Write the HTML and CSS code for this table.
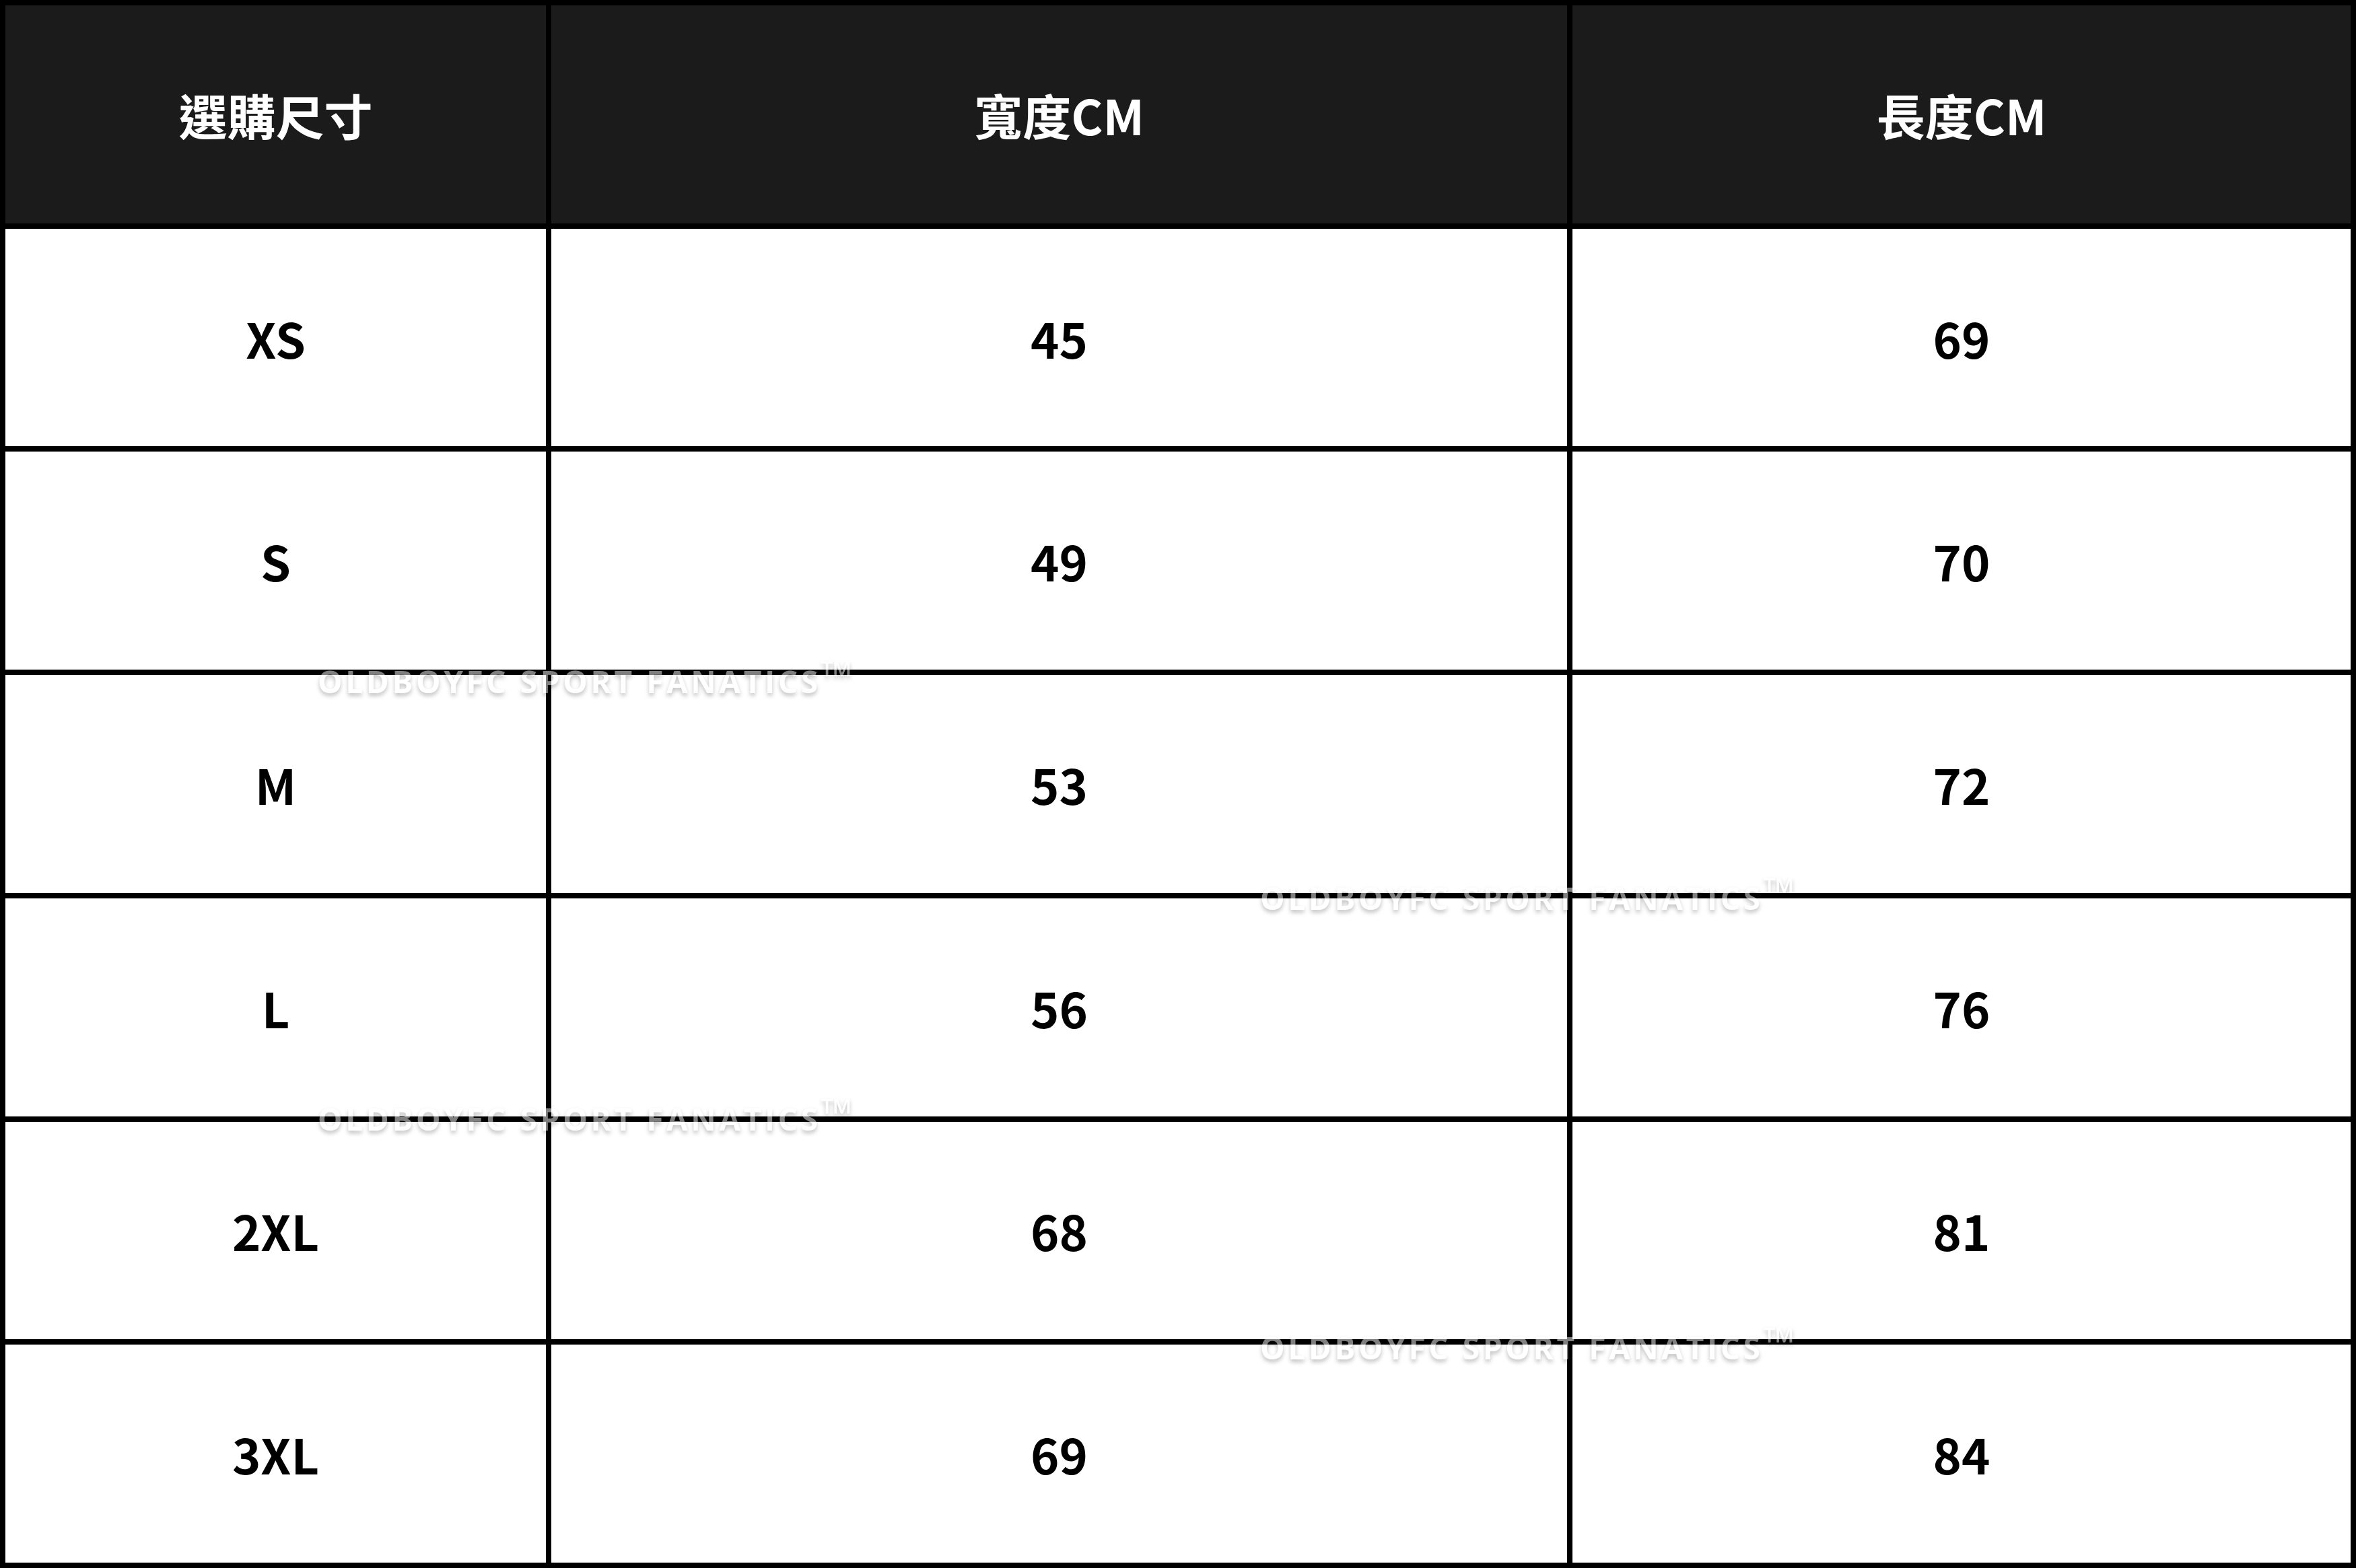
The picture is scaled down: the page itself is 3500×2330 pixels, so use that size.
FILE: index.html
```html
<!DOCTYPE html>
<html lang="zh-Hant">
<head>
<meta charset="utf-8">
<title>尺寸表</title>
<link rel="stylesheet" href="styles.css">
</head>
<body>
<div class="chart">
  <div class="grid">
    <div class="cell head">選購尺寸</div>
    <div class="cell head">寬度CM</div>
    <div class="cell head">長度CM</div>

    <div class="cell">XS</div><div class="cell">45</div><div class="cell">69</div>
    <div class="cell">S</div><div class="cell">49</div><div class="cell">70</div>
    <div class="cell">M</div><div class="cell">53</div><div class="cell">72</div>
    <div class="cell">L</div><div class="cell">56</div><div class="cell">76</div>
    <div class="cell">2XL</div><div class="cell">68</div><div class="cell">81</div>
    <div class="cell">3XL</div><div class="cell">69</div><div class="cell">84</div>
  </div>
  <div class="mark mark-1">OLDBOYFC SPORT FANATICS<span class="tm">™</span></div>
  <div class="mark mark-2">OLDBOYFC SPORT FANATICS<span class="tm">™</span></div>
  <div class="mark mark-3">OLDBOYFC SPORT FANATICS<span class="tm">™</span></div>
  <div class="mark mark-4">OLDBOYFC SPORT FANATICS<span class="tm">™</span></div>
</div>
</body>
</html>
```

FILE: styles.css
```css
html, body {
  margin: 0;
  padding: 0;
  background: #000;
}

.chart {
  position: relative;
  width: 3500px;
  height: 2330px;
  overflow: hidden;
}

.grid {
  box-sizing: border-box;
  width: 3500px;
  height: 2330px;
  display: grid;
  grid-template-columns: 803px 1509px 1156px;
  grid-template-rows: repeat(7, 1fr);
  gap: 8px;
  padding: 8px;
  background: #000;
}

.cell {
  display: flex;
  align-items: center;
  justify-content: center;
  background: #fff;
  color: #000;
  font-family: "Noto Sans CJK TC", "Noto Sans", sans-serif;
  font-weight: 700;
  font-size: 72px;
  line-height: 1;
}

.head {
  background: #1b1b1b;
  color: #fff;
}

.mark {
  position: absolute;
  font-family: "Open Sans", "Noto Sans", sans-serif;
  font-weight: 700;
  font-size: 46px;
  line-height: 1;
  letter-spacing: 4.6px;
  white-space: nowrap;
  color: #fff;
  opacity: 0.5;
  text-shadow: 0 4px 6px rgba(0, 0, 0, 0.5);
}

.tm {
  font-weight: 400;
  font-size: 62px;
  letter-spacing: 0;
  line-height: 0;
  position: relative;
  top: -3px;
}

.mark-1 { left: 472px; top: 989px; }
.mark-2 { left: 1872px; top: 1311px; }
.mark-3 { left: 472px; top: 1639px; }
.mark-4 { left: 1872px; top: 1979px; }
```
